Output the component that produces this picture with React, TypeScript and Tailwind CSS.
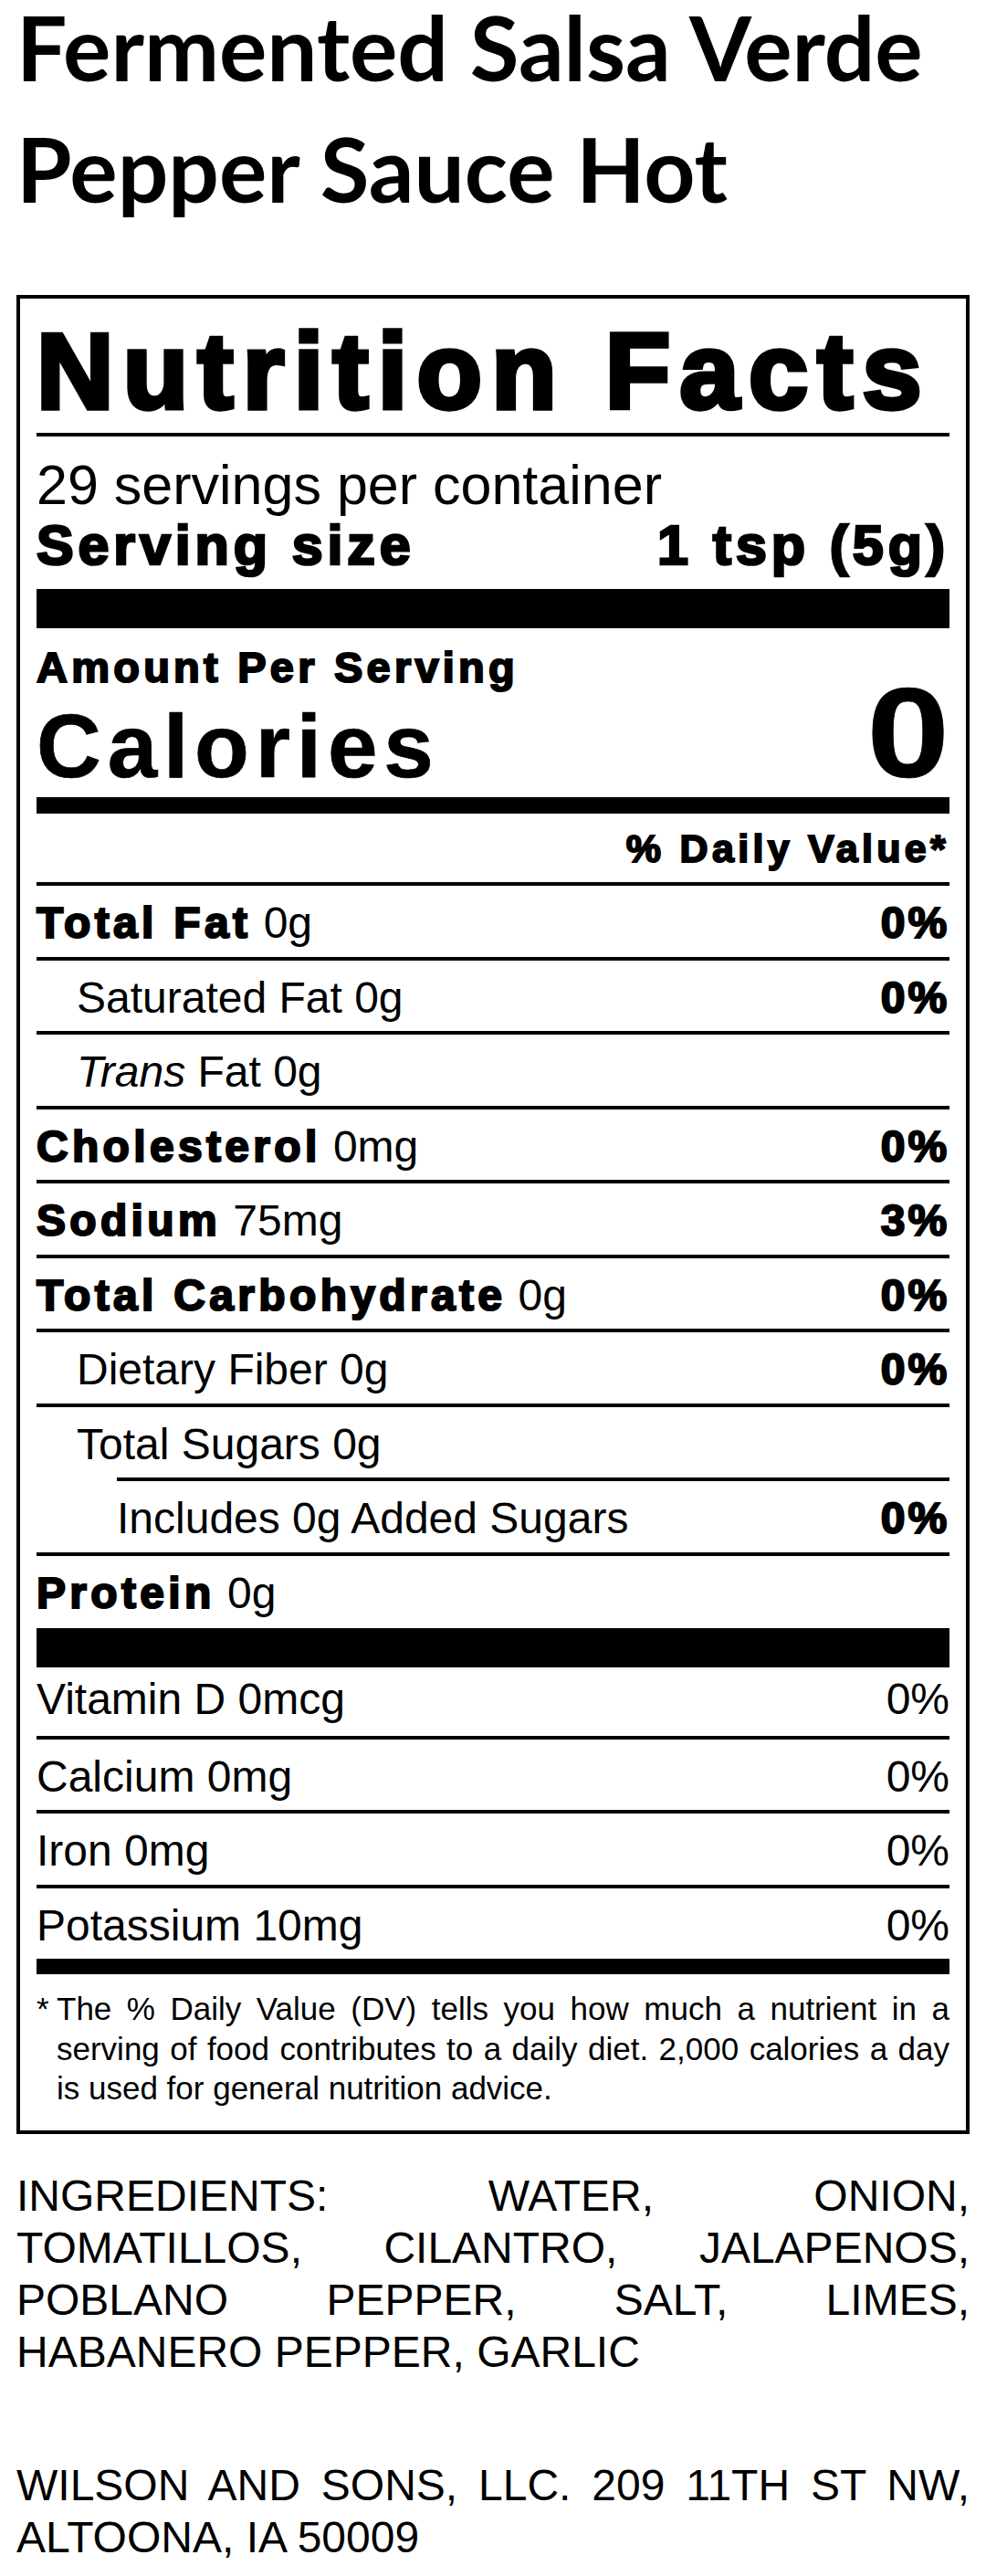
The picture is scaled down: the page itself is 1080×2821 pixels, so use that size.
const sans = "font-['Liberation_Sans',Arial,Helvetica,sans-serif]";
const heavy = "font-bold [-webkit-text-stroke:0.045em_#000]";

type NutrientRow = {
  strong?: string;
  italic?: string;
  text: string;
  dv?: string;
  indent?: 0 | 1 | 2;
};

const rows: NutrientRow[] = [
  { strong: "Total Fat", text: " 0g", dv: "0%" },
  { text: "Saturated Fat 0g", dv: "0%", indent: 1 },
  { italic: "Trans", text: " Fat 0g", indent: 1 },
  { strong: "Cholesterol", text: " 0mg", dv: "0%" },
  { strong: "Sodium", text: " 75mg", dv: "3%" },
  { strong: "Total Carbohydrate", text: " 0g", dv: "0%" },
  { text: "Dietary Fiber 0g", dv: "0%", indent: 1 },
  { text: "Total Sugars 0g", indent: 1 },
  { text: "Includes 0g Added Sugars", dv: "0%", indent: 2 },
];

const vitamins = [
  { name: "Vitamin D 0mcg", dv: "0%" },
  { name: "Calcium 0mg", dv: "0%" },
  { name: "Iron 0mg", dv: "0%" },
  { name: "Potassium 10mg", dv: "0%" },
];

const Row = ({ row }: { row: NutrientRow }) => {
  return (
    <div
      className={`flex justify-between border-t-4 border-black pt-[17px] pb-[12.5px] text-[48px] leading-[48px] ${
        row.indent === 2 ? "ml-[88px]" : ""
      }`}
    >
      <span className={`whitespace-pre ${row.indent === 1 ? "pl-[44px]" : ""}`}>
        {row.strong && <span className={`tracking-[0.09em] ${heavy}`}>{row.strong}</span>}
        {row.italic && <span className="italic">{row.italic}</span>}
        {row.text}
      </span>
      {row.dv && <span className={`tracking-[0.06em] ${heavy}`}>{row.dv}</span>}
    </div>
  );
};

export default function App() {
  return (
    <div className={`flex flex-col w-[1080px] min-h-[2821px] bg-white text-black px-[18px] ${sans}`}>
      <h1 className="font-['Lato',sans-serif] font-bold text-[98px]">
        <span className="block leading-[103px]">Fermented Salsa Verde</span>
        <span className="block mt-[30px] leading-[103px]">Pepper Sauce Hot</span>
      </h1>

      <div className="mt-[87px] border-4 border-black px-[18px] pt-[21px] pb-[24px]">
        <div className={`text-[117px] leading-[117px] tracking-[0.088em] ${heavy}`}>Nutrition Facts</div>
        <div className="mt-[9px] h-[4px] bg-black" />

        <div className="mt-[20px] text-[61px] leading-[66px]">29 servings per container</div>
        <div className={`flex justify-between text-[61px] leading-[66px] tracking-[0.08em] ${heavy}`}>
          <span>Serving size</span>
          <span>1 tsp (5g)</span>
        </div>
        <div className="mt-[15px] h-[43px] bg-black" />

        <div className={`mt-[21px] text-[47px] leading-[44px] tracking-[0.09em] ${heavy}`}>Amount Per Serving</div>
        <div className={`flex items-baseline justify-between ${heavy}`}>
          <span className="text-[98px] leading-[100px] tracking-[0.07em]">Calories</span>
          <span className="origin-right scale-x-[1.16] text-[140px] leading-[100px]">0</span>
        </div>
        <div className="mt-[6px] h-[18px] bg-black" />

        <div className={`mt-[13px] text-right text-[43px] leading-[50px] tracking-[0.1em] ${heavy}`}>
          % Daily Value*
        </div>

        <div className="mt-[12px]">
          {rows.map((row) => (
            <Row key={row.text + (row.strong ?? "")} row={row} />
          ))}
          <div className="flex border-t-4 border-black pt-[17px] pb-[14px] text-[48px] leading-[48px]">
            <span className="whitespace-pre">
              <span className={`tracking-[0.09em] ${heavy}`}>Protein</span> 0g
            </span>
          </div>
        </div>
        <div className="h-[43px] bg-black" />

        {vitamins.map((v, i) => (
          <div
            key={v.name}
            className={`flex justify-between text-[48px] leading-[48px] ${
              i === 0 ? "pt-[11px] pb-[16px]" : "border-t-4 border-black pt-[17px] pb-[12.5px]"
            }`}
          >
            <span>{v.name}</span>
            <span>{v.dv}</span>
          </div>
        ))}
        <div className="h-[17px] bg-black" />

        <div className="mt-[16px] flex text-[35px] leading-[43.5px]">
          <span className="w-[22px] shrink-0">*</span>
          <p className="flex-1 text-justify">
            The % Daily Value (DV) tells you how much a nutrient in a serving of food contributes to a daily
            diet. 2,000 calories a day is used for general nutrition advice.
          </p>
        </div>
      </div>

      <p className="mt-[39px] text-justify text-[48px] leading-[57px]">
        INGREDIENTS: WATER, ONION, TOMATILLOS, CILANTRO, JALAPENOS, POBLANO PEPPER, SALT, LIMES, HABANERO
        PEPPER, GARLIC
      </p>

      <p className="mt-[89px] text-justify text-[48px] leading-[57px]">
        WILSON AND SONS, LLC. 209 11TH ST NW, ALTOONA, IA 50009
      </p>
    </div>
  );
}
